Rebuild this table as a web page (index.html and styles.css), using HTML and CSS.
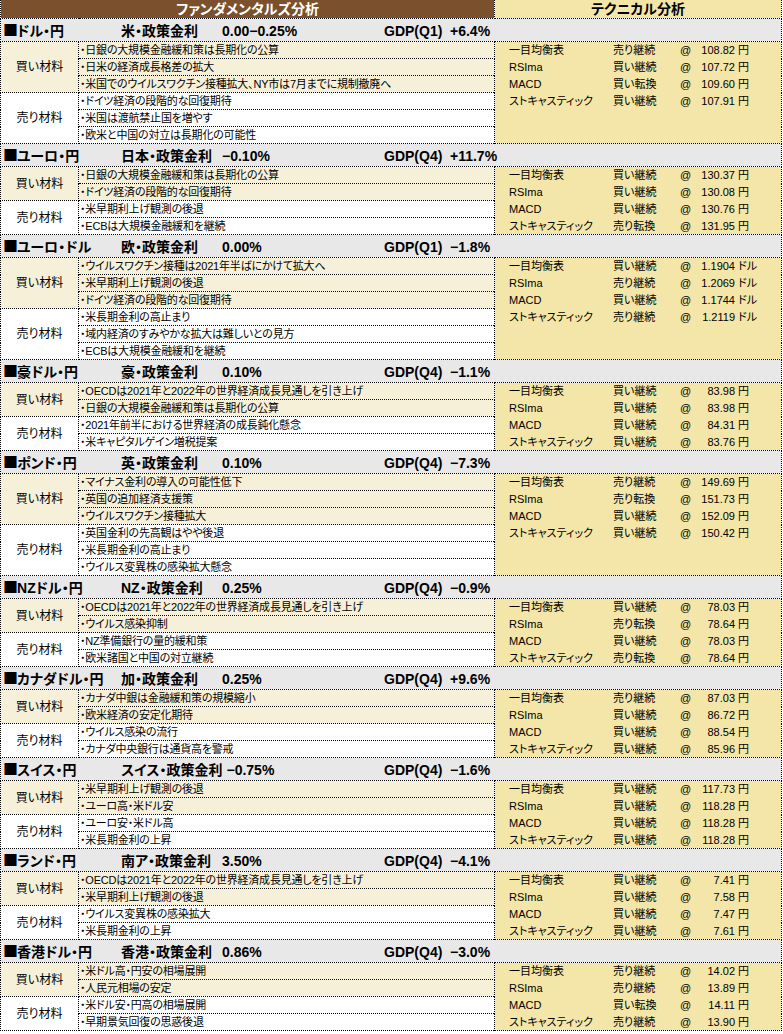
FILE: index.html
```html
<!DOCTYPE html>
<html lang="ja">
<head>
<meta charset="utf-8">
<title>ファンダメンタルズ分析</title>
<link rel="stylesheet" href="styles.css">
</head>
<body>
<table class="sheet">
<colgroup><col class="c-label"><col class="c-text"><col class="c-tech"></colgroup>
<tbody>
<tr class="top"><th colspan="2" class="top-fund">ファンダメンタルズ分析</th><th class="top-tech">テクニカル分析</th></tr>

<tr class="sec"><td colspan="3"><div class="sec-head"><span class="pair"><span class="sq">■</span>ドル・円</span><span class="policy"><span class="plabel">米・政策金利</span><span class="rate">0.00−0.25%</span></span><span class="gdp">GDP(Q1)</span><span class="chg">+6.4%</span></div></td></tr>
<tr class="buy"><td class="label" rowspan="3">買い材料</td><td class="txt">・日銀の大規模金融緩和策は長期化の公算</td><td class="tech" rowspan="6">
<div class="tl"><span>一目均衡表</span><span>売り継続</span><span>@</span><span class="num">108.82</span><span>円</span></div>
<div class="tl"><span>RSIma</span><span>買い継続</span><span>@</span><span class="num">107.72</span><span>円</span></div>
<div class="tl"><span>MACD</span><span>買い転換</span><span>@</span><span class="num">109.60</span><span>円</span></div>
<div class="tl"><span>ストキャスティック</span><span>買い継続</span><span>@</span><span class="num">107.91</span><span>円</span></div>
</td></tr>
<tr class="buy"><td class="txt">・日米の経済成長格差の拡大</td></tr>
<tr class="buy last"><td class="txt">・米国でのウイルスワクチン接種拡大、NY市は7月までに規制撤廃へ</td></tr>
<tr class="sell"><td class="label" rowspan="3">売り材料</td><td class="txt">・ドイツ経済の段階的な回復期待</td></tr>
<tr class="sell"><td class="txt">・米国は渡航禁止国を増やす</td></tr>
<tr class="sell"><td class="txt">・欧米と中国の対立は長期化の可能性</td></tr>

<tr class="sec"><td colspan="3"><div class="sec-head"><span class="pair"><span class="sq">■</span>ユーロ・円</span><span class="policy"><span class="plabel">日本・政策金利</span><span class="rate">−0.10%</span></span><span class="gdp">GDP(Q4)</span><span class="chg">+11.7%</span></div></td></tr>
<tr class="buy"><td class="label" rowspan="2">買い材料</td><td class="txt">・日銀の大規模金融緩和策は長期化の公算</td><td class="tech" rowspan="4">
<div class="tl"><span>一目均衡表</span><span>買い継続</span><span>@</span><span class="num">130.37</span><span>円</span></div>
<div class="tl"><span>RSIma</span><span>買い継続</span><span>@</span><span class="num">130.08</span><span>円</span></div>
<div class="tl"><span>MACD</span><span>買い継続</span><span>@</span><span class="num">130.76</span><span>円</span></div>
<div class="tl"><span>ストキャスティック</span><span>売り転換</span><span>@</span><span class="num">131.95</span><span>円</span></div>
</td></tr>
<tr class="buy last"><td class="txt">・ドイツ経済の段階的な回復期待</td></tr>
<tr class="sell"><td class="label" rowspan="2">売り材料</td><td class="txt">・米早期利上げ観測の後退</td></tr>
<tr class="sell"><td class="txt">・ECBは大規模金融緩和を継続</td></tr>

<tr class="sec"><td colspan="3"><div class="sec-head"><span class="pair"><span class="sq">■</span>ユーロ・ドル</span><span class="policy"><span class="plabel">欧・政策金利</span><span class="rate">0.00%</span></span><span class="gdp">GDP(Q1)</span><span class="chg">−1.8%</span></div></td></tr>
<tr class="buy"><td class="label" rowspan="3">買い材料</td><td class="txt">・ウイルスワクチン接種は2021年半ばにかけて拡大へ</td><td class="tech" rowspan="6">
<div class="tl"><span>一目均衡表</span><span>買い継続</span><span>@</span><span class="num">1.1904</span><span>ドル</span></div>
<div class="tl"><span>RSIma</span><span>売り継続</span><span>@</span><span class="num">1.2069</span><span>ドル</span></div>
<div class="tl"><span>MACD</span><span>買い継続</span><span>@</span><span class="num">1.1744</span><span>ドル</span></div>
<div class="tl"><span>ストキャスティック</span><span>売り継続</span><span>@</span><span class="num">1.2119</span><span>ドル</span></div>
</td></tr>
<tr class="buy"><td class="txt">・米早期利上げ観測の後退</td></tr>
<tr class="buy last"><td class="txt">・ドイツ経済の段階的な回復期待</td></tr>
<tr class="sell"><td class="label" rowspan="3">売り材料</td><td class="txt">・米長期金利の高止まり</td></tr>
<tr class="sell"><td class="txt">・域内経済のすみやかな拡大は難しいとの見方</td></tr>
<tr class="sell"><td class="txt">・ECBは大規模金融緩和を継続</td></tr>

<tr class="sec"><td colspan="3"><div class="sec-head"><span class="pair"><span class="sq">■</span>豪ドル・円</span><span class="policy"><span class="plabel">豪・政策金利</span><span class="rate">0.10%</span></span><span class="gdp">GDP(Q4)</span><span class="chg">−1.1%</span></div></td></tr>
<tr class="buy"><td class="label" rowspan="2">買い材料</td><td class="txt">・OECDは2021年と2022年の世界経済成長見通しを引き上げ</td><td class="tech" rowspan="4">
<div class="tl"><span>一目均衡表</span><span>買い継続</span><span>@</span><span class="num">83.98</span><span>円</span></div>
<div class="tl"><span>RSIma</span><span>買い継続</span><span>@</span><span class="num">83.98</span><span>円</span></div>
<div class="tl"><span>MACD</span><span>買い継続</span><span>@</span><span class="num">84.31</span><span>円</span></div>
<div class="tl"><span>ストキャスティック</span><span>買い継続</span><span>@</span><span class="num">83.76</span><span>円</span></div>
</td></tr>
<tr class="buy last"><td class="txt">・日銀の大規模金融緩和策は長期化の公算</td></tr>
<tr class="sell"><td class="label" rowspan="2">売り材料</td><td class="txt">・2021年前半における世界経済の成長鈍化懸念</td></tr>
<tr class="sell"><td class="txt">・米キャピタルゲイン増税提案</td></tr>

<tr class="sec"><td colspan="3"><div class="sec-head"><span class="pair"><span class="sq">■</span>ポンド・円</span><span class="policy"><span class="plabel">英・政策金利</span><span class="rate">0.10%</span></span><span class="gdp">GDP(Q4)</span><span class="chg">−7.3%</span></div></td></tr>
<tr class="buy"><td class="label" rowspan="3">買い材料</td><td class="txt">・マイナス金利の導入の可能性低下</td><td class="tech" rowspan="6">
<div class="tl"><span>一目均衡表</span><span>売り継続</span><span>@</span><span class="num">149.69</span><span>円</span></div>
<div class="tl"><span>RSIma</span><span>売り転換</span><span>@</span><span class="num">151.73</span><span>円</span></div>
<div class="tl"><span>MACD</span><span>買い継続</span><span>@</span><span class="num">152.09</span><span>円</span></div>
<div class="tl"><span>ストキャスティック</span><span>買い継続</span><span>@</span><span class="num">150.42</span><span>円</span></div>
</td></tr>
<tr class="buy"><td class="txt">・英国の追加経済支援策</td></tr>
<tr class="buy last"><td class="txt">・ウイルスワクチン接種拡大</td></tr>
<tr class="sell"><td class="label" rowspan="3">売り材料</td><td class="txt">・英国金利の先高観はやや後退</td></tr>
<tr class="sell"><td class="txt">・米長期金利の高止まり</td></tr>
<tr class="sell"><td class="txt">・ウイルス変異株の感染拡大懸念</td></tr>

<tr class="sec"><td colspan="3"><div class="sec-head"><span class="pair"><span class="sq">■</span>NZドル・円</span><span class="policy"><span class="plabel">NZ・政策金利</span><span class="rate">0.25%</span></span><span class="gdp">GDP(Q4)</span><span class="chg">−0.9%</span></div></td></tr>
<tr class="buy"><td class="label" rowspan="2">買い材料</td><td class="txt">・OECDは2021年と2022年の世界経済成長見通しを引き上げ</td><td class="tech" rowspan="4">
<div class="tl"><span>一目均衡表</span><span>買い継続</span><span>@</span><span class="num">78.03</span><span>円</span></div>
<div class="tl"><span>RSIma</span><span>売り転換</span><span>@</span><span class="num">78.64</span><span>円</span></div>
<div class="tl"><span>MACD</span><span>買い継続</span><span>@</span><span class="num">78.03</span><span>円</span></div>
<div class="tl"><span>ストキャスティック</span><span>売り転換</span><span>@</span><span class="num">78.64</span><span>円</span></div>
</td></tr>
<tr class="buy last"><td class="txt">・ウイルス感染抑制</td></tr>
<tr class="sell"><td class="label" rowspan="2">売り材料</td><td class="txt">・NZ準備銀行の量的緩和策</td></tr>
<tr class="sell"><td class="txt">・欧米諸国と中国の対立継続</td></tr>

<tr class="sec"><td colspan="3"><div class="sec-head"><span class="pair"><span class="sq">■</span>カナダドル・円</span><span class="policy"><span class="plabel">加・政策金利</span><span class="rate">0.25%</span></span><span class="gdp">GDP(Q4)</span><span class="chg">+9.6%</span></div></td></tr>
<tr class="buy"><td class="label" rowspan="2">買い材料</td><td class="txt">・カナダ中銀は金融緩和策の規模縮小</td><td class="tech" rowspan="4">
<div class="tl"><span>一目均衡表</span><span>売り継続</span><span>@</span><span class="num">87.03</span><span>円</span></div>
<div class="tl"><span>RSIma</span><span>買い継続</span><span>@</span><span class="num">86.72</span><span>円</span></div>
<div class="tl"><span>MACD</span><span>買い継続</span><span>@</span><span class="num">88.54</span><span>円</span></div>
<div class="tl"><span>ストキャスティック</span><span>買い継続</span><span>@</span><span class="num">85.96</span><span>円</span></div>
</td></tr>
<tr class="buy last"><td class="txt">・欧米経済の安定化期待</td></tr>
<tr class="sell"><td class="label" rowspan="2">売り材料</td><td class="txt">・ウイルス感染の流行</td></tr>
<tr class="sell"><td class="txt">・カナダ中央銀行は通貨高を警戒</td></tr>

<tr class="sec"><td colspan="3"><div class="sec-head"><span class="pair"><span class="sq">■</span>スイス・円</span><span class="policy"><span class="plabel">スイス・政策金利</span><span class="rate">−0.75%</span></span><span class="gdp">GDP(Q4)</span><span class="chg">−1.6%</span></div></td></tr>
<tr class="buy"><td class="label" rowspan="2">買い材料</td><td class="txt">・米早期利上げ観測の後退</td><td class="tech" rowspan="4">
<div class="tl"><span>一目均衡表</span><span>買い継続</span><span>@</span><span class="num">117.73</span><span>円</span></div>
<div class="tl"><span>RSIma</span><span>買い継続</span><span>@</span><span class="num">118.28</span><span>円</span></div>
<div class="tl"><span>MACD</span><span>買い継続</span><span>@</span><span class="num">118.28</span><span>円</span></div>
<div class="tl"><span>ストキャスティック</span><span>買い継続</span><span>@</span><span class="num">118.28</span><span>円</span></div>
</td></tr>
<tr class="buy last"><td class="txt">・ユーロ高・米ドル安</td></tr>
<tr class="sell"><td class="label" rowspan="2">売り材料</td><td class="txt">・ユーロ安・米ドル高</td></tr>
<tr class="sell"><td class="txt">・米長期金利の上昇</td></tr>

<tr class="sec"><td colspan="3"><div class="sec-head"><span class="pair"><span class="sq">■</span>ランド・円</span><span class="policy"><span class="plabel">南ア・政策金利</span><span class="rate">3.50%</span></span><span class="gdp">GDP(Q4)</span><span class="chg">−4.1%</span></div></td></tr>
<tr class="buy"><td class="label" rowspan="2">買い材料</td><td class="txt">・OECDは2021年と2022年の世界経済成長見通しを引き上げ</td><td class="tech" rowspan="4">
<div class="tl"><span>一目均衡表</span><span>買い継続</span><span>@</span><span class="num">7.41</span><span>円</span></div>
<div class="tl"><span>RSIma</span><span>買い継続</span><span>@</span><span class="num">7.58</span><span>円</span></div>
<div class="tl"><span>MACD</span><span>買い継続</span><span>@</span><span class="num">7.47</span><span>円</span></div>
<div class="tl"><span>ストキャスティック</span><span>買い継続</span><span>@</span><span class="num">7.61</span><span>円</span></div>
</td></tr>
<tr class="buy last"><td class="txt">・米早期利上げ観測の後退</td></tr>
<tr class="sell"><td class="label" rowspan="2">売り材料</td><td class="txt">・ウイルス変異株の感染拡大</td></tr>
<tr class="sell"><td class="txt">・米長期金利の上昇</td></tr>

<tr class="sec"><td colspan="3"><div class="sec-head"><span class="pair"><span class="sq">■</span>香港ドル・円</span><span class="policy"><span class="plabel">香港・政策金利</span><span class="rate">0.86%</span></span><span class="gdp">GDP(Q4)</span><span class="chg">−3.0%</span></div></td></tr>
<tr class="buy"><td class="label" rowspan="2">買い材料</td><td class="txt">・米ドル高・円安の相場展開</td><td class="tech" rowspan="4">
<div class="tl"><span>一目均衡表</span><span>売り継続</span><span>@</span><span class="num">14.02</span><span>円</span></div>
<div class="tl"><span>RSIma</span><span>売り継続</span><span>@</span><span class="num">13.89</span><span>円</span></div>
<div class="tl"><span>MACD</span><span>買い転換</span><span>@</span><span class="num">14.11</span><span>円</span></div>
<div class="tl"><span>ストキャスティック</span><span>売り継続</span><span>@</span><span class="num">13.90</span><span>円</span></div>
</td></tr>
<tr class="buy last"><td class="txt">・人民元相場の安定</td></tr>
<tr class="sell"><td class="label" rowspan="2">売り材料</td><td class="txt">・米ドル安・円高の相場展開</td></tr>
<tr class="sell"><td class="txt">・早期景気回復の思惑後退</td></tr>
</tbody>
</table>
</body>
</html>
```
FILE: styles.css
```css
html, body {
  margin: 0;
  padding: 0;
  background: #ffffff;
}
body {
  font-family: "Liberation Sans", "Noto Sans CJK JP", sans-serif;
  font-feature-settings: "palt";
  color: #000;
}
.sheet {
  border-collapse: collapse;
  table-layout: fixed;
  width: 781px;
}
.c-label { width: 78px; }
.c-text { width: 416px; }
.c-tech { width: 287px; }

.sheet td, .sheet th {
  padding: 0;
  border: 1px dotted #000;
  overflow: hidden;
  white-space: nowrap;
}

.top th {
  font-size: 14px;
  font-weight: bold;
  text-align: center;
  line-height: 18px;
  height: 18px;
  border-top: none;
}
.top-fund {
  background: #7b512d;
  color: #fff;
  border-left: none;
}
.top-tech {
  background: #f3e6a8;
  color: #000;
}

.sec td { background: #e8e8e8; }
.sec-head {
  display: flex;
  align-items: baseline;
  height: 22px;
  line-height: 22px;
  font-size: 14px;
  font-weight: bold;
  overflow: hidden;
}
.sq {
  font-family: "Noto Sans CJK JP", sans-serif;
  font-feature-settings: normal;
  font-size: 15px;
  margin-right: -1px;
}
.pair { width: 118px; padding-left: 2px; flex: none; }
.policy { width: 263px; flex: none; display: flex; align-items: baseline; }
.plabel { min-width: 97px; margin-right: 4px; }
.gdp { width: 66px; flex: none; }
.chg { flex: none; }

.buy td.label, .buy td.txt { background: #f6f0d9; }
.sell td.label, .sell td.txt { background: #fff; }

.label {
  font-size: 12px;
  line-height: 14px;
  text-align: center;
  vertical-align: middle;
}
.txt {
  font-size: 11px;
  line-height: 16px;
  height: 16px;
  letter-spacing: -0.2px;
  padding-left: 1px !important;
}
.tech {
  background: #f3e6a8;
  vertical-align: top;
  padding: 0 0 0 14px !important;
}
.tl {
  display: grid;
  grid-template-columns: 104px 66px 20px 39px auto;
  height: 17px;
  line-height: 17px;
  align-items: center;
  font-size: 11px;
}
.tl:last-child { height: 15px; }
.tl .num { text-align: right; padding-right: 3px; }
.tl span:nth-child(3) { padding-left: 1px; }
```
